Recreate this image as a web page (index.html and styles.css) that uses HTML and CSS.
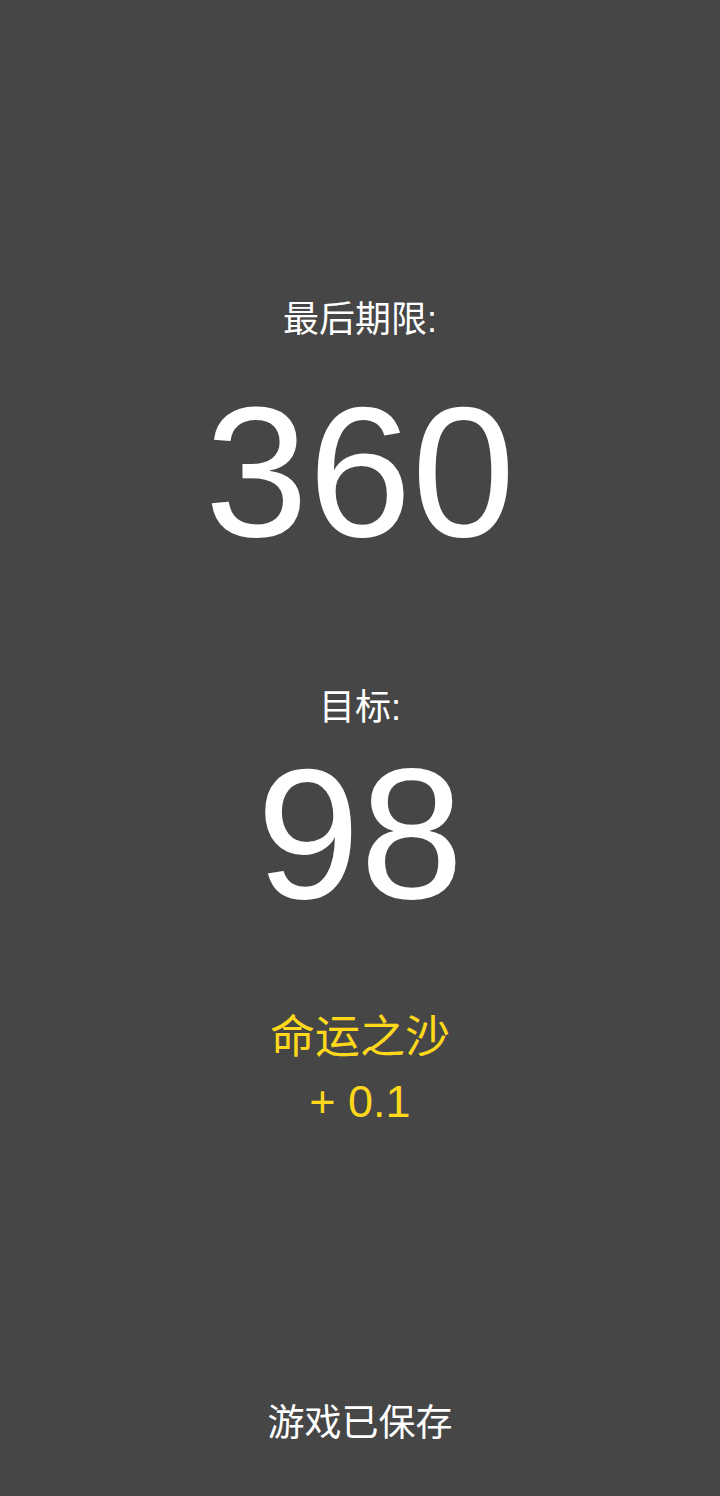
FILE: index.html
```html
<!DOCTYPE html>
<html lang="zh">
<head>
<meta charset="utf-8">
<link rel="stylesheet" href="styles.css">
</head>
<body>
<main class="screen">
  <section class="block block-deadline">
    <div class="label">最后期限:</div>
    <div class="big">360</div>
  </section>
  <section class="block block-target">
    <div class="label">目标:</div>
    <div class="big big-target">98</div>
  </section>
  <section class="block block-fate">
    <div class="fate">命运之沙</div>
    <div class="fate fate-plus">+ 0.1</div>
  </section>
  <footer class="saved">游戏已保存</footer>
</main>
</body>
</html>
```
FILE: styles.css
```css
html, body {
  margin: 0;
  padding: 0;
  background: #464646;
}
body {
  font-family: "Liberation Sans", "Noto Sans CJK SC", sans-serif;
  color: #ffffff;
}
.screen {
  width: 720px;
  height: 1496px;
  display: flex;
  flex-direction: column;
  align-items: center;
  text-align: center;
}
.block {
  display: flex;
  flex-direction: column;
  align-items: center;
}
.label {
  font-size: 36px;
  line-height: 48px;
}
.big {
  font-size: 186px;
  line-height: 184px;
}
.block-deadline {
  margin-top: 296px;
}
.block-deadline .big {
  margin-top: 36px;
}
.block-target {
  margin-top: 120px;
}
.big-target {
  margin-top: 10px;
}
.block-fate {
  margin-top: 82px;
}
.fate {
  font-size: 45px;
  line-height: 60px;
  color: #ffd81c;
}
.fate-plus {
  margin-top: 4px;
}
.saved {
  margin-top: 268px;
  font-size: 37px;
  line-height: 48px;
}
```
